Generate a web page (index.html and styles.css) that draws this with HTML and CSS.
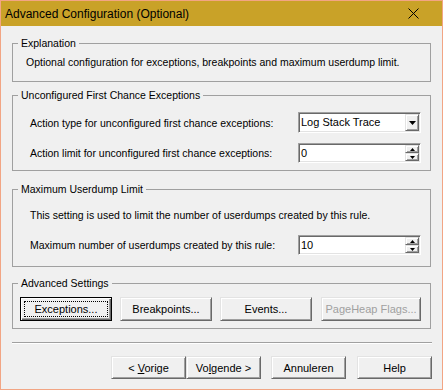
FILE: index.html
```html
<!DOCTYPE html>
<html lang="en">
  <head>
    <meta charset="UTF-8" />
    <title>Advanced Configuration (Optional)</title>
    <link rel="stylesheet" href="styles.css">
  </head>
  <body>
    <div class="window">
      <div class="titlebar">
        <span class="title">Advanced Configuration (Optional)</span>
        <svg class="closeIcon" width="11" height="11" viewBox="0 0 11 11">
          <path d="M0.5 0.5 L10.5 10.5 M10.5 0.5 L0.5 10.5" stroke="#000" stroke-width="1" fill="none" />
        </svg>
      </div>
      <div class="content">
        <fieldset class="group" id="groupExplain">
          <legend>Explanation</legend>
          <div class="groupBody">
            <p class="text">Optional configuration for exceptions, breakpoints and maximum userdump limit.</p>
          </div>
        </fieldset>

        <fieldset class="group" id="groupFirstChance">
          <legend>Unconfigured First Chance Exceptions</legend>
          <div class="groupBody">
            <div class="row">
              <span class="label">Action type for unconfigured first chance exceptions:</span>
              <div class="combo">
                <span class="comboText">Log Stack Trace</span>
                <span class="comboBtn">
                  <svg width="7" height="4" viewBox="0 0 7 4"><path d="M0 0 H7 L3.5 4 Z" fill="#000" /></svg>
                </span>
              </div>
            </div>
            <div class="row" id="rowLimit">
              <span class="label">Action limit for unconfigured first chance exceptions:</span>
              <div class="spin">
                <span class="spinText">0</span>
                <span class="spinBtns">
                  <span class="spinBtn"><svg width="5" height="3" viewBox="0 0 5 3"><path d="M2.5 0 L5 3 H0 Z" fill="#000" /></svg></span>
                  <span class="spinBtn"><svg width="5" height="3" viewBox="0 0 5 3"><path d="M0 0 H5 L2.5 3 Z" fill="#000" /></svg></span>
                </span>
              </div>
            </div>
          </div>
        </fieldset>

        <fieldset class="group" id="groupUserdump">
          <legend>Maximum Userdump Limit</legend>
          <div class="groupBody">
            <p class="text">This setting is used to limit the number of userdumps created by this rule.</p>
            <div class="row" id="rowMaxDumps">
              <span class="label">Maximum number of userdumps created by this rule:</span>
              <div class="spin">
                <span class="spinText">10</span>
                <span class="spinBtns">
                  <span class="spinBtn"><svg width="5" height="3" viewBox="0 0 5 3"><path d="M2.5 0 L5 3 H0 Z" fill="#000" /></svg></span>
                  <span class="spinBtn"><svg width="5" height="3" viewBox="0 0 5 3"><path d="M0 0 H5 L2.5 3 Z" fill="#000" /></svg></span>
                </span>
              </div>
            </div>
          </div>
        </fieldset>

        <fieldset class="group" id="groupAdvanced">
          <legend>Advanced Settings</legend>
          <div class="groupBody">
            <div class="buttonRow">
              <button class="btn btnDefault"><span class="focusRing">Exceptions...</span></button>
              <button class="btn">Breakpoints...</button>
              <button class="btn">Events...</button>
              <button class="btn btnWide" disabled>PageHeap Flags...</button>
            </div>
          </div>
        </fieldset>

        <div class="separator"></div>

        <div class="footer">
          <button class="btn btnNav">&lt; <u>V</u>orige</button>
          <button class="btn btnNav">Vo<u>l</u>gende &gt;</button>
          <button class="btn btnNav btnSpaced">Annuleren</button>
          <button class="btn btnNav btnSpaced">Help</button>
        </div>
      </div>
    </div>
  </body>
</html>
```

FILE: styles.css
```css
* {
  box-sizing: border-box;
}
body {
  margin: 0;
  background-color: #f0f0f0;
  font-family: "Liberation Sans", Arial, sans-serif;
  font-size: 10.5px;
  color: #000000;
}
.window {
  width: 443px;
  height: 390px;
  border: 1px solid #f2a584;
  background-color: #f0f0f0;
  display: flex;
  flex-direction: column;
}
.titlebar {
  height: 25px;
  background-color: #c9a228;
  display: flex;
  align-items: center;
  padding-left: 4px;
}
.title {
  font-size: 12px;
  flex-grow: 1;
}
.closeIcon {
  margin-right: 23px;
}
.content {
  padding: 0 11px;
}

/* group boxes */
.group {
  border: 1px solid #a0a0a0;
  margin: 0;
  padding: 0;
  min-inline-size: auto;
}
.group > legend {
  margin-left: 5px;
  padding: 0 3px;
  line-height: 15px;
}
#groupExplain {
  margin-top: 10px;
}
#groupExplain > .groupBody {
  padding: 5px 0 12px 13px;
}
#groupFirstChance {
  margin-top: 6px;
}
#groupFirstChance > .groupBody {
  padding: 9px 9px 7px 17px;
}
#groupUserdump {
  margin-top: 11px;
}
#groupUserdump > .groupBody {
  padding: 12px 9px 11px 17px;
}
#groupAdvanced {
  margin-top: 9px;
}
#groupAdvanced > .groupBody {
  padding: 6px 0 7px 7px;
}
.text {
  margin: 0;
  line-height: 13px;
}
.row {
  display: flex;
  align-items: center;
}
.row > .label {
  flex-grow: 1;
}
#rowLimit {
  margin-top: 10px;
}
#rowMaxDumps {
  margin-top: 13px;
}

/* sunken fields */
.combo,
.spin {
  width: 123px;
  background-color: #ffffff;
  border: 1px solid;
  border-color: #a0a0a0 #ffffff #ffffff #a0a0a0;
  box-shadow: inset 1px 1px #696969, inset -1px -1px #e3e3e3;
  display: flex;
  padding: 1px;
}
.combo {
  height: 21px;
}
.spin {
  height: 20px;
}
.comboText {
  flex-grow: 1;
  font-size: 11px;
  line-height: 17px;
  padding-left: 1px;
}
.spinText {
  flex-grow: 1;
  font-size: 11px;
  line-height: 16px;
  padding-left: 1px;
}
.comboBtn,
.spinBtn {
  background-color: #f0f0f0;
  border: 1px solid;
  border-color: #e3e3e3 #696969 #696969 #e3e3e3;
  box-shadow: inset 1px 1px #ffffff, inset -1px -1px #a0a0a0;
  display: flex;
  align-items: center;
  justify-content: center;
}
.comboBtn {
  width: 14px;
}
.spinBtns {
  display: flex;
  flex-direction: column;
  width: 14px;
}
.spinBtn {
  height: 8px;
}

/* buttons */
.btn {
  font-family: "Liberation Sans", Arial, sans-serif;
  font-size: 11px;
  color: #000000;
  background-color: #f0f0f0;
  border: 1px solid;
  border-color: #e3e3e3 #696969 #696969 #e3e3e3;
  box-shadow: inset 1px 1px #ffffff, inset -1px -1px #a0a0a0;
  margin: 0;
  padding: 0;
  height: 24px;
  width: 92px;
}
.btn:disabled {
  color: #a0a0a0;
}
.btnDefault {
  border-color: #000000;
  box-shadow: inset 1px 1px #ffffff, inset -1px -1px #696969, inset -2px -2px #a0a0a0;
  padding: 3px;
}
.focusRing {
  display: block;
  height: 100%;
  line-height: 14px;
  border: 1px dotted #000000;
}
.btnWide {
  width: 100px;
  margin-left: 1px;
}
.buttonRow {
  display: flex;
  gap: 8px;
}
.separator {
  margin-top: 13px;
  border-top: 1px solid #a0a0a0;
  border-bottom: 1px solid #ffffff;
  width: 420px;
}
.footer {
  margin-top: 12px;
  display: flex;
  justify-content: flex-end;
  margin-right: -1px;
}
.btnNav {
  width: 75px;
  height: 23px;
}
.btnSpaced {
  margin-left: 10px;
}
.btnSpaced + .btnSpaced {
  margin-left: 11px;
}
```
